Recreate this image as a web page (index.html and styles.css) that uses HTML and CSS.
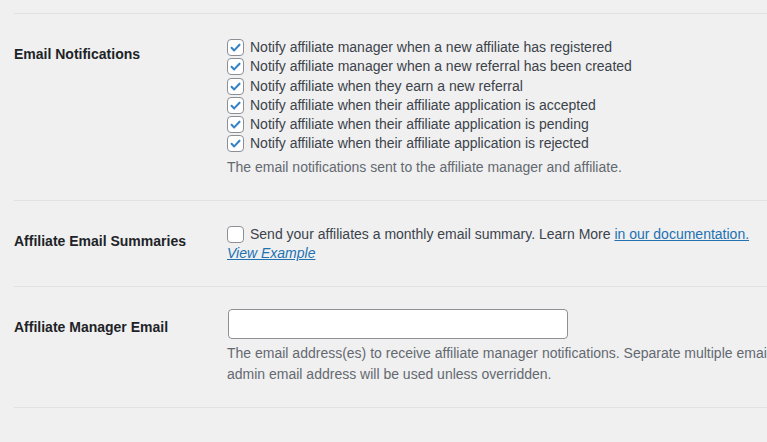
FILE: index.html
```html
<!DOCTYPE html>
<html lang="en">
<head>
    <meta charset="UTF-8">
    <meta name="viewport" content="width=device-width, initial-scale=1.0">
    <title>Email Settings</title>
    <link rel="stylesheet" href="styles.css">
</head>
<body>
    <div class="form-table">
        <div class="row first">
            <div class="label">Email Notifications</div>
            <div class="field">
                <label class="check"><span class="box checked"><svg viewBox="0 0 16 16"><path d="M3.8 8.3l2.8 2.8L12.3 5"/></svg></span>Notify affiliate manager when a new affiliate has registered</label>
                <label class="check"><span class="box checked"><svg viewBox="0 0 16 16"><path d="M3.8 8.3l2.8 2.8L12.3 5"/></svg></span>Notify affiliate manager when a new referral has been created</label>
                <label class="check"><span class="box checked"><svg viewBox="0 0 16 16"><path d="M3.8 8.3l2.8 2.8L12.3 5"/></svg></span>Notify affiliate when they earn a new referral</label>
                <label class="check"><span class="box checked"><svg viewBox="0 0 16 16"><path d="M3.8 8.3l2.8 2.8L12.3 5"/></svg></span>Notify affiliate when their affiliate application is accepted</label>
                <label class="check"><span class="box checked"><svg viewBox="0 0 16 16"><path d="M3.8 8.3l2.8 2.8L12.3 5"/></svg></span>Notify affiliate when their affiliate application is pending</label>
                <label class="check"><span class="box checked"><svg viewBox="0 0 16 16"><path d="M3.8 8.3l2.8 2.8L12.3 5"/></svg></span>Notify affiliate when their affiliate application is rejected</label>
                <p class="description">The email notifications sent to the affiliate manager and affiliate.</p>
            </div>
        </div>
        <div class="row">
            <div class="label">Affiliate Email Summaries</div>
            <div class="field">
                <label class="check"><span class="box"></span>Send your affiliates a monthly email summary. Learn More&nbsp;<a href="#">in our documentation.</a></label>
                <a class="example" href="#">View Example</a>
            </div>
        </div>
        <div class="row last">
            <div class="label">Affiliate Manager Email</div>
            <div class="field">
                <input class="text-input" type="text">
                <p class="description">The email address(es) to receive affiliate manager notifications. Separate multiple emails with commas. If left blank, the<br>admin email address will be used unless overridden.</p>
            </div>
        </div>
    </div>
</body>
</html>
```

FILE: styles.css
```css
body {
    margin: 0;
    padding: 13px 0 0 14px;
    background-color: #f0f0f1;
    font-family: "Liberation Sans", Arial, sans-serif;
    font-size: 14px;
    color: #3c434a;
    overflow: hidden;
}
.form-table {
    border-top: 1px solid #e1e1e3;
    width: 1200px;
}
.row {
    display: flex;
    border-bottom: 1px solid #e1e1e3;
    padding-bottom: 23px;
}
.row.first,
.row.last {
    padding-bottom: 22px;
}
.label {
    width: 213px;
    flex-shrink: 0;
    padding-top: 30px;
    line-height: 20px;
    font-weight: bold;
    color: #1d2327;
}
.field {
    padding-top: 24px;
    line-height: 19.25px;
}
.check {
    display: flex;
    align-items: center;
    white-space: nowrap;
}
.box {
    width: 15px;
    height: 15px;
    flex-shrink: 0;
    border: 1px solid #8c8f94;
    border-radius: 4px;
    background-color: #fff;
    margin-right: 6px;
    display: inline-flex;
}
.box svg {
    width: 15px;
    height: 15px;
}
.box path {
    fill: none;
    stroke: #3582c4;
    stroke-width: 2.2;
    stroke-linecap: round;
    stroke-linejoin: round;
}
a {
    color: #2271b1;
}
.example {
    font-style: italic;
}
.description {
    margin: 3px 0 0;
    line-height: 21px;
    color: #646970;
    white-space: nowrap;
}
.text-input {
    display: block;
    box-sizing: border-box;
    width: 340px;
    height: 30px;
    margin: -2px 0 0 1px;
    border: 1px solid #8c8f94;
    border-radius: 4px;
    background-color: #fff;
}
.text-input + .description {
    margin-top: 4px;
}
```
